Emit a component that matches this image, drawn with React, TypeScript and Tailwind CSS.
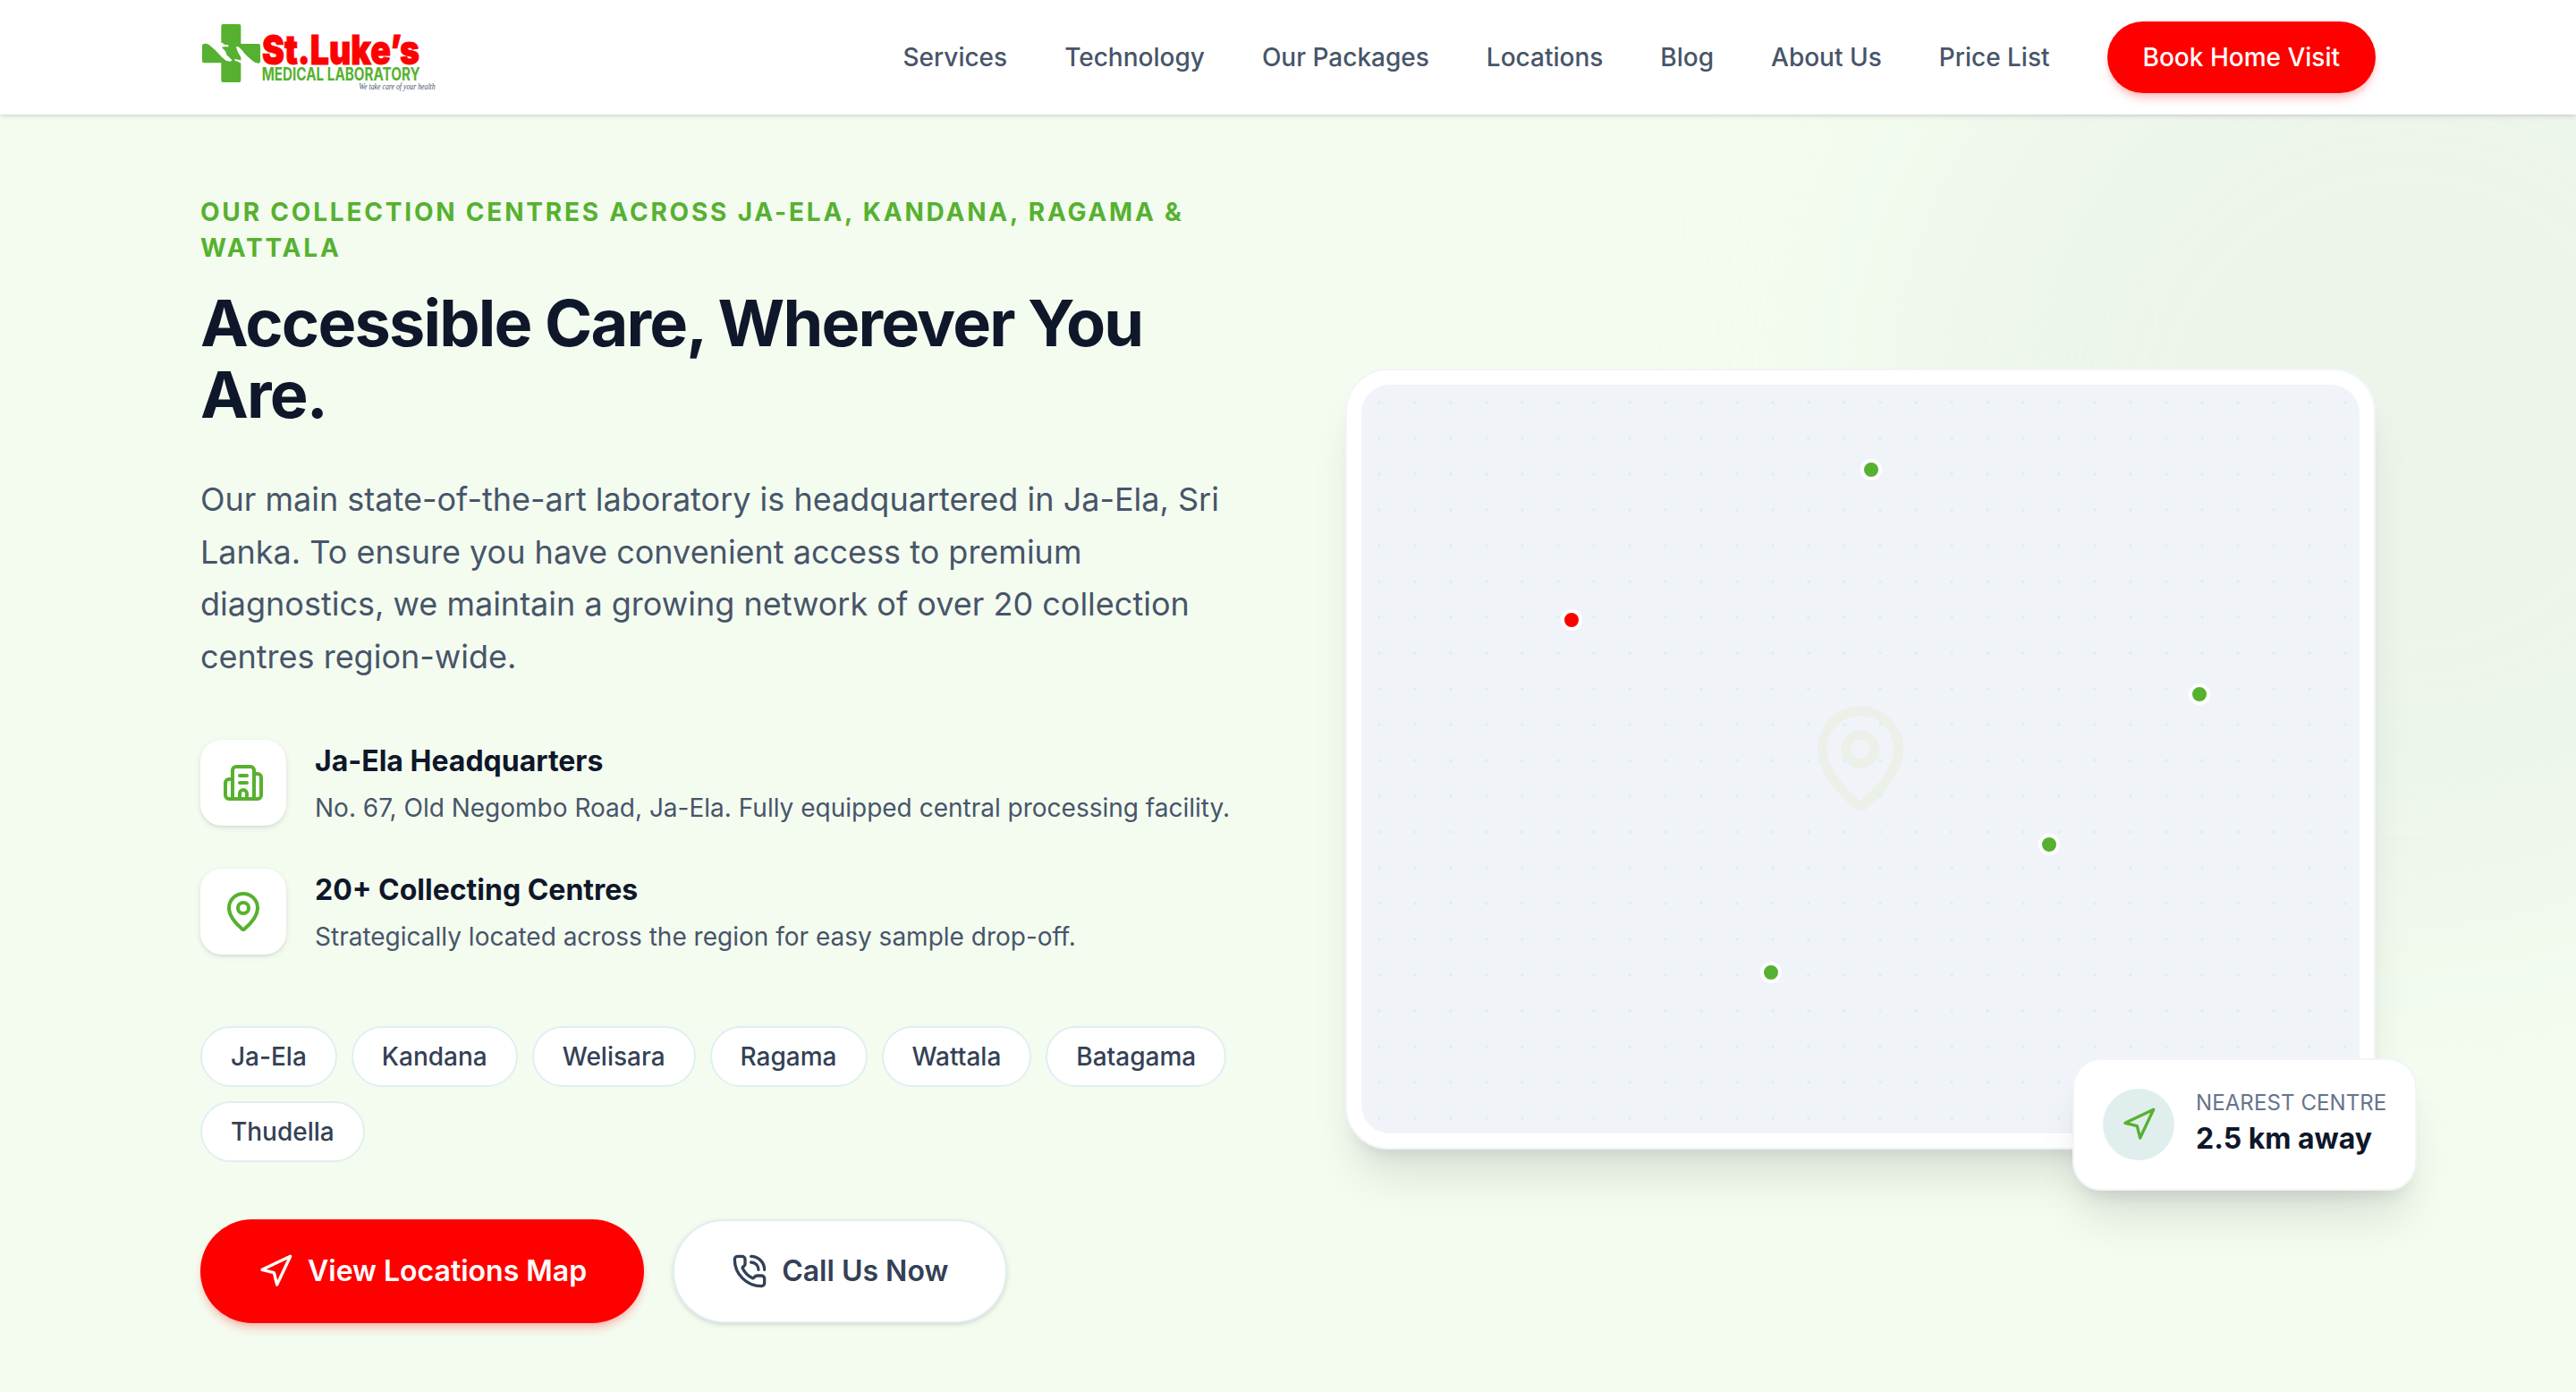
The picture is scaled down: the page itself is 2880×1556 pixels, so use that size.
import type { ReactNode } from 'react';
import { Building2, MapPin, Navigation, PhoneCall } from 'lucide-react';

const navLinks = ['Services', 'Technology', 'Our Packages', 'Locations', 'Blog', 'About Us', 'Price List'];

const areas = ['Ja-Ela', 'Kandana', 'Welisara', 'Ragama', 'Wattala', 'Batagama', 'Thudella'];

const pins = [
  'top-[30%] left-[20%] bg-[#ff0000]',
  'top-[10%] left-[50%] bg-[#56b130]',
  'top-[40%] right-[15%] bg-[#56b130]',
  'top-[60%] right-[30%] bg-[#56b130]',
  'bottom-[20%] left-[40%] bg-[#56b130]',
];

function Logo() {
  return (
    <svg viewBox="72 0 801 384" className="h-32 w-[267px] overflow-visible" aria-label="St.Luke's Medical Laboratory">
      {/* Cross */}
      <g fill="#56b130">
        <rect x="142" y="81" width="66" height="195" rx="6" />
        <path d="M84 147 Q92 145 101 150 Q122 166 144 191 L160 211 H84 Q78 211 78 205 V153 Q78 147 84 147Z" />
        <path d="M267 212 Q258 213 248 205 Q226 188 208 165 L190 147 H267 Q273 147 273 153 V206 Q273 212 267 212Z" />
      </g>
      {/* Hands */}
      <g fill="#fff">
        <path d="M137 145 L146 143 L152 149 L165 151 L167 157 L150 157 L144 159 L156 172 L161 185 L169 192 L174 197 L179 203 L170 206 L158 203 L141 189Z" />
        <path d="M192 156 L200 157 L209 166 L214 172 V196 L208 192 L201 180 L195 168Z" />
        <path d="M186 198 L200 200 L209 203 L213 213 L205 211 L197 206 L189 204Z" />
      </g>
      <text x="279" y="216" textLength="528" lengthAdjust="spacingAndGlyphs" fill="#ff0000" stroke="#ff0000" strokeWidth="3" fontSize="137" fontWeight="900" fontFamily="Inter, sans-serif">
        St.Luke’s
      </text>
      <text x="278" y="270" textLength="531" lengthAdjust="spacingAndGlyphs" fill="#56b130" fontSize="59" fontWeight="700" fontFamily="Inter, sans-serif">
        MEDICAL LABORATORY
      </text>
      <text x="604" y="301" textLength="256" lengthAdjust="spacingAndGlyphs" fill="#475569" fontSize="32" fontStyle="italic" fontFamily="'Liberation Serif', serif">
        We take care of your health
      </text>
    </svg>
  );
}

interface FeatureProps {
  icon: ReactNode;
  title: string;
  text: string;
}

function Feature({ icon, title, text }: FeatureProps) {
  return (
    <div className="flex items-start gap-8">
      <div className="flex size-24 shrink-0 items-center justify-center rounded-3xl bg-white text-[#56b130] shadow-[0_2px_6px_rgba(0,0,0,0.1),0_2px_4px_-2px_rgba(0,0,0,0.1)]">
        {icon}
      </div>
      <div>
        <h3 className="text-[32px] leading-[48px] font-bold text-[#0f172a]">{title}</h3>
        <p className="mt-2 text-[28px] leading-10 whitespace-nowrap text-[#475569]">{text}</p>
      </div>
    </div>
  );
}

export default function App() {
  return (
    <div className="relative flex h-[1556px] w-[2880px] flex-col overflow-hidden bg-[#f4fcf0] font-['Inter',sans-serif] antialiased">
      {/* Header */}
      <header className="relative z-10 h-32 shrink-0 bg-white shadow-[0_2px_6px_rgba(0,0,0,0.1),0_2px_4px_-2px_rgba(0,0,0,0.1)]">
        <div className="mx-auto flex h-full max-w-[2560px] items-center justify-between px-16">
          <Logo />
          <nav className="flex items-center gap-16">
            {navLinks.map((link) => (
              <a key={link} href="#" className="text-[28px] leading-10 font-medium text-[#475569]">
                {link}
              </a>
            ))}
            <button className="h-20 rounded-full bg-[#ff0000] px-10 text-[28px] font-medium text-white shadow-[0_8px_12px_-2px_rgba(255,0,0,0.2),0_4px_8px_-4px_rgba(255,0,0,0.2)]">
              Book Home Visit
            </button>
          </nav>
        </div>
      </header>

      {/* Backdrop glow */}
      <div className="absolute -top-[100px] -right-[370px] size-[1120px] rounded-full bg-[#dfe9df]/35 blur-[128px]" />

      {/* Hero */}
      <section className="relative mx-auto grid w-full max-w-[2560px] grid-cols-2 items-center gap-32 px-16 pt-[89px]">
        <div>
          <p className="mb-6 text-[28px] leading-10 font-bold tracking-[0.1em] text-[#56b130] uppercase">
            Our Collection Centres Across Ja-Ela, Kandana, Ragama &amp; Wattala
          </p>
          <h1 className="mb-12 text-[72px] leading-20 font-bold tracking-tight text-[#0f172a]">
            Accessible Care, Wherever You Are.
          </h1>
          <p className="mb-16 text-[36px] leading-relaxed text-[#475569]">
            Our main state-of-the-art laboratory is headquartered in Ja-Ela, Sri Lanka. To ensure you have convenient
            access to premium diagnostics, we maintain a growing network of over 20 collection centres region-wide.
          </p>

          <div className="mb-20 flex flex-col gap-12">
            <Feature
              icon={<Building2 size={48} />}
              title="Ja-Ela Headquarters"
              text="No. 67, Old Negombo Road, Ja-Ela. Fully equipped central processing facility."
            />
            <Feature
              icon={<MapPin size={48} />}
              title="20+ Collecting Centres"
              text="Strategically located across the region for easy sample drop-off."
            />
          </div>

          <div className="mb-16 flex flex-wrap gap-4">
            {areas.map((area) => (
              <span
                key={area}
                className="rounded-full border-2 border-[#e0eff1] bg-white px-8 py-3 text-[28px] leading-10 font-medium text-[#334155]"
              >
                {area}
              </span>
            ))}
          </div>

          <div className="flex gap-8">
            <button className="flex items-center gap-4 rounded-full bg-[#ff0000] px-16 text-[32px] leading-[48px] font-semibold text-white shadow-[0_8px_12px_-2px_rgba(255,0,0,0.2),0_4px_8px_-4px_rgba(255,0,0,0.2)]">
              <Navigation size={40} />
              View Locations Map
            </button>
            <button className="flex items-center gap-4 rounded-full border-2 border-[#e0eff1] bg-white px-16 py-8 text-[32px] leading-[48px] font-semibold text-[#334155] shadow-[0_2px_6px_rgba(0,0,0,0.1),0_2px_4px_-2px_rgba(0,0,0,0.1)]">
              <PhoneCall size={40} />
              Call Us Now
            </button>
          </div>
        </div>

        {/* Map card */}
        <div className="relative rounded-[48px] border-2 border-[#f1f5f9] bg-white p-4 shadow-[0_40px_50px_-10px_rgba(0,0,0,0.1),0_16px_20px_-12px_rgba(0,0,0,0.1)]">
          <div className="relative flex aspect-[4/3] items-center justify-center overflow-hidden rounded-[32px] bg-[#f0f4f9] bg-[radial-gradient(#dff0ef_2px,transparent_2px)] bg-[size:40px_40px]">
            <MapPin size={128} className="text-[#ebf0e8]" />
            {pins.map((pin) => (
              <span key={pin} className={`absolute size-6 rounded-full border-4 border-white ${pin}`} />
            ))}
          </div>

          <div className="absolute -right-12 -bottom-12 flex w-[385px] items-center gap-6 rounded-[32px] border-2 border-[#f1f5f9] bg-white p-8 shadow-[0_40px_50px_-10px_rgba(0,0,0,0.1),0_16px_20px_-12px_rgba(0,0,0,0.1)]">
            <div className="flex size-20 shrink-0 items-center justify-center rounded-full bg-[#e0efee] text-[#56b130]">
              <Navigation size={40} />
            </div>
            <div>
              <p className="text-[24px] leading-8 tracking-[0.1px] whitespace-nowrap text-[#64748b] uppercase">
                Nearest Centre
              </p>
              <p className="text-[32px] leading-[48px] font-bold whitespace-nowrap text-[#0f172a]">2.5 km away</p>
            </div>
          </div>
        </div>
      </section>
    </div>
  );
}
